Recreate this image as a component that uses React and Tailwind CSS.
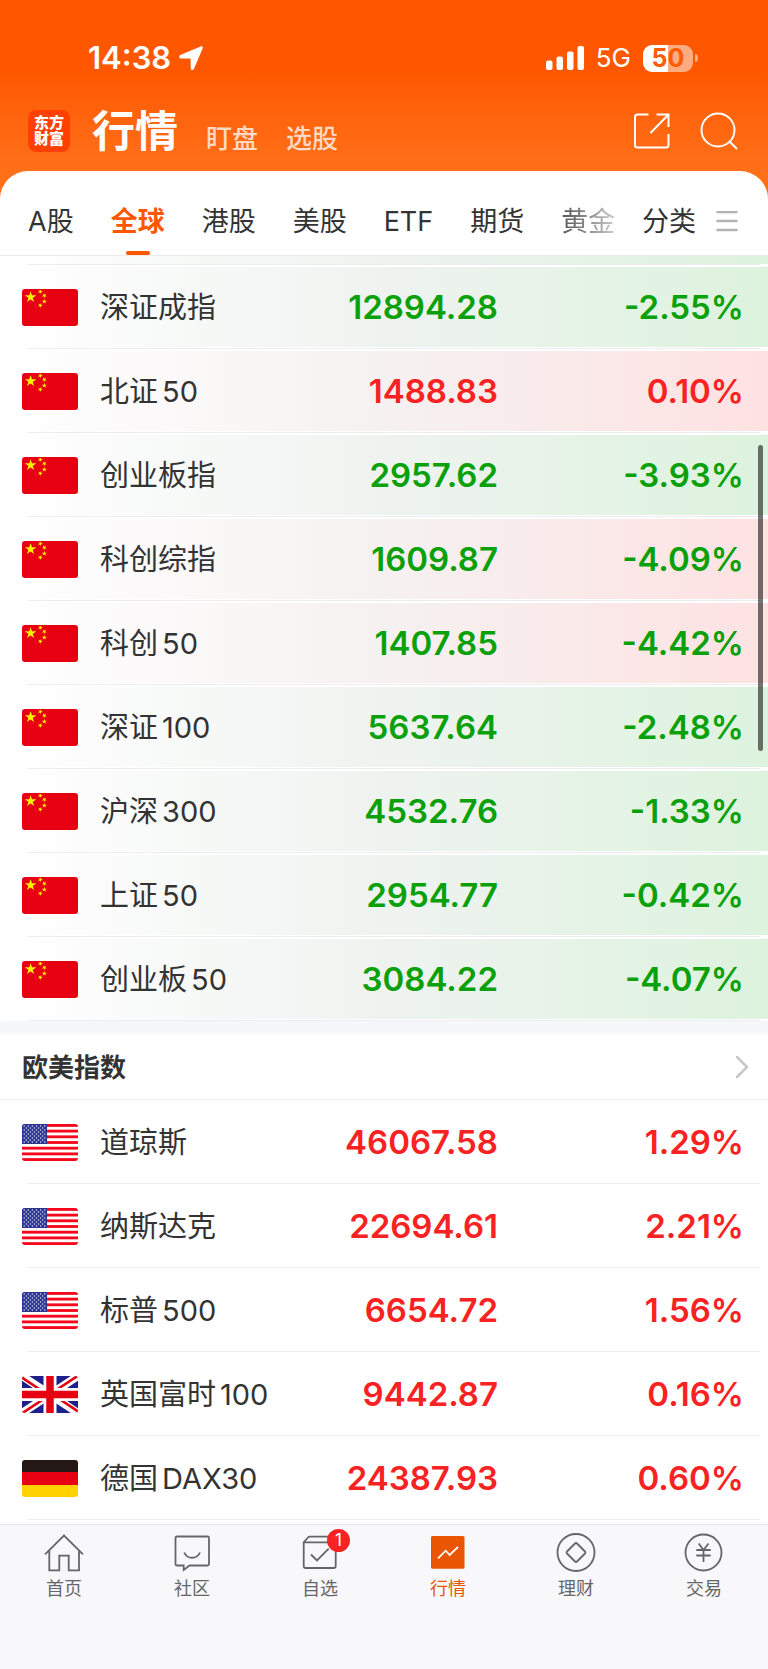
import { ChevronRight } from 'lucide-react';

const cnIndices = [
  { name: '深证成指', price: '12894.28', change: '-2.55%', tint: 'green' },
  { name: '北证50', price: '1488.83', change: '0.10%', tint: 'red' },
  { name: '创业板指', price: '2957.62', change: '-3.93%', tint: 'green' },
  { name: '科创综指', price: '1609.87', change: '-4.09%', tint: 'red' },
  { name: '科创50', price: '1407.85', change: '-4.42%', tint: 'red' },
  { name: '深证100', price: '5637.64', change: '-2.48%', tint: 'green' },
  { name: '沪深300', price: '4532.76', change: '-1.33%', tint: 'green' },
  { name: '上证50', price: '2954.77', change: '-0.42%', tint: 'green' },
  { name: '创业板50', price: '3084.22', change: '-4.07%', tint: 'green' },
];

const westIndices = [
  { name: '道琼斯', price: '46067.58', change: '1.29%', flag: 'us' },
  { name: '纳斯达克', price: '22694.61', change: '2.21%', flag: 'us' },
  { name: '标普500', price: '6654.72', change: '1.56%', flag: 'us' },
  { name: '英国富时100', price: '9442.87', change: '0.16%', flag: 'uk' },
  { name: '德国DAX30', price: '24387.93', change: '0.60%', flag: 'de' },
];

const tints = {
  green: 'bg-linear-to-r from-white via-[#eff3f0] to-[#ddf3de]',
  red: 'bg-linear-to-r from-white via-[#f6f1f1] to-[#fee2e2]',
  none: 'bg-white',
};

const star = '0,-10 2.3,-3.1 9.5,-3.1 3.7,1.2 5.9,8.1 0,3.8 -5.9,8.1 -3.7,1.2 -9.5,-3.1 -2.3,-3.1';

function ChinaFlag() {
  return (
    <g>
      <rect width="56" height="37" fill="#e60012" />
      <g fill="#fff100">
        <polygon points={star} transform="translate(8.6 8.2) scale(0.6)" />
        <polygon points={star} transform="translate(18.3 2.6) rotate(20) scale(0.26)" />
        <polygon points={star} transform="translate(22.3 6.6) rotate(40) scale(0.26)" />
        <polygon points={star} transform="translate(22.3 12.6) scale(0.26)" />
        <polygon points={star} transform="translate(18.3 16.4) rotate(20) scale(0.26)" />
      </g>
    </g>
  );
}

function UsFlag() {
  const stripes = [0, 2, 4, 6, 8, 10, 12];
  const dots = [];
  for (let row = 0; row < 9; row++) {
    for (let col = 0; col < (row % 2 ? 5 : 6); col++) {
      dots.push([2.2 + col * 4.1 + (row % 2 ? 2.05 : 0), 2 + row * 2]);
    }
  }
  return (
    <g>
      <rect width="56" height="37" fill="#fff" />
      {stripes.map((s) => (
        <rect key={s} y={(s * 37) / 13} width="56" height={37 / 13} fill="#f5081c" />
      ))}
      <rect width="25" height="20" fill="#2d3594" />
      {dots.map(([x, y]) => (
        <circle key={`${x}-${y}`} cx={x} cy={y} r="0.75" fill="#dfe1f2" />
      ))}
    </g>
  );
}

function UkFlag() {
  return (
    <g>
      <rect width="56" height="37" fill="#1d2088" />
      <path d="M0 0 56 37M56 0 0 37" stroke="#fff" strokeWidth="8" />
      <path d="M-1 1 27 19.5M29 17.5 57 -1M57 36 29 17.5M27 19.5 -1 38" stroke="#e60012" strokeWidth="2.6" />
      <path d="M28 0V37M0 18.5H56" stroke="#fff" strokeWidth="13" />
      <path d="M28 0V37M0 18.5H56" stroke="#e60012" strokeWidth="7.5" />
    </g>
  );
}

function GermanFlag() {
  return (
    <g>
      <rect width="56" height="13" fill="#231815" />
      <rect y="12" width="56" height="13" fill="#e60012" />
      <rect y="25" width="56" height="12" fill="#ffd100" />
    </g>
  );
}

const flags = { cn: ChinaFlag, us: UsFlag, uk: UkFlag, de: GermanFlag };

function Flag({ code }) {
  const Shape = flags[code];
  return (
    <svg viewBox="0 0 56 37" className="w-14 h-[37px] shrink-0 rounded-[3px]" aria-hidden="true">
      <Shape />
    </svg>
  );
}

// Splits "北证50" so the latin part gets a small gap
function IndexName({ name }) {
  const [, zh, latin] = name.match(/^([^A-Z0-9]+)(.*)$/);
  return (
    <span className="flex items-center gap-1 pt-0.5">
      <span>{zh}</span>
      {latin && <span>{latin}</span>}
    </span>
  );
}

function IndexTable({ label, rows }) {
  return (
    <table className="block" aria-label={label}>
      <tbody className="block">
        {rows.map((row) => {
          const color = row.change.startsWith('-') ? 'text-[#0aa00a]' : 'text-[#f92222]';
          return (
            <tr
              key={row.name}
              className={`relative flex items-center h-[84px] pl-[22px] pr-6 border-y-2 border-white bg-clip-padding after:absolute after:left-7 after:right-2 after:-bottom-0.5 after:h-px after:bg-[#ececee] ${tints[row.tint || 'none']}`}
            >
              <td className="flex flex-1 items-center gap-[22px] text-[29px] leading-10 text-[#333]">
                <Flag code={row.flag || 'cn'} />
                <IndexName name={row.name} />
              </td>
              <td className={`text-right text-[33px] leading-10 font-semibold ${color}`}>{row.price}</td>
              <td className={`w-[246px] text-right text-[33px] leading-10 font-semibold ${color}`}>{row.change}</td>
            </tr>
          );
        })}
      </tbody>
    </table>
  );
}

function StatusBar() {
  return (
    <div className="flex items-center justify-between h-[42px] pl-[88px] pr-[70px]">
      <div className="flex items-center gap-2">
        <span className="text-[31px] leading-10 font-semibold">14:38</span>
        <svg viewBox="0 0 24 24" className="size-6" fill="currentColor" aria-hidden="true">
          <path d="M21.6.4 1.3 9C-.5 9.8 0 12.4 1.9 12.4L10.8 12.5Q11.6 12.5 11.6 13.3L11.7 22.2C11.7 24.3 14.2 24.6 15 22.8L23.7 2.3C24.2.9 23 0 21.6.4Z" />
        </svg>
      </div>
      <div className="flex items-center">
        <svg viewBox="0 0 38 26" className="w-[38px] h-[26px]" fill="currentColor" aria-hidden="true">
          <rect x="0" y="15.5" width="6.5" height="9.5" rx="2" />
          <rect x="10.5" y="11.5" width="6.5" height="13.5" rx="2" />
          <rect x="21" y="6.5" width="6.5" height="18.5" rx="2" />
          <rect x="31.5" y="1" width="6.5" height="24" rx="2" />
        </svg>
        <span className="ml-3 text-[26px] leading-10">5G</span>
        <span className="flex items-center justify-center ml-3 w-[50px] h-[27px] rounded-[9px] bg-linear-to-r from-white from-50% to-[#ffab80] to-50% text-[25px] leading-[27px] font-bold text-[#ff5a05]">
          50
        </span>
        <span className="ml-0.5 w-[3px] h-2 rounded-r-full bg-[#ffab80]" />
      </div>
    </div>
  );
}

function Header() {
  return (
    <header className="pt-[37px] pb-7 bg-linear-to-b from-[#ff5700] from-35% to-[#ff7018] to-85% text-white">
      <StatusBar />
      <div className="flex items-center pt-3 pl-7 pr-[30px] h-[92px]">
        <div className="flex flex-col items-center justify-center size-[42px] rounded-lg bg-[#ff4000] text-[15px] leading-4 font-black">
          <span>东方</span>
          <span>财富</span>
        </div>
        <nav className="flex items-center gap-7 ml-[22px] text-[26px] leading-10 font-medium">
          <h1 className="text-[43px] leading-[60px] font-bold">行情</h1>
          <a href="#watch" className="pt-4 text-white/75">盯盘</a>
          <a href="#pick" className="pt-4 text-white/75">选股</a>
        </nav>
        <div className="flex items-center gap-[30px] ml-auto">
          <button type="button" aria-label="分享">
            <svg viewBox="0 0 36 36" className="size-9" fill="none" stroke="currentColor" strokeWidth="2" aria-hidden="true">
              <path d="M14.5 1.5H3.5Q1 1.5 1 4V32Q1 34.5 3.5 34.5H32Q34.5 34.5 34.5 32V21M22.5 1.5H34.5V14M34.5 1.5 16.5 20" />
            </svg>
          </button>
          <button type="button" aria-label="搜索">
            <svg viewBox="0 0 38 38" className="size-[38px]" fill="none" stroke="currentColor" strokeWidth="2" aria-hidden="true">
              <circle cx="18" cy="18" r="16.5" />
              <path d="M29.5 29.5 37 37" />
            </svg>
          </button>
        </div>
      </div>
    </header>
  );
}

const tabs = ['A股', '全球', '港股', '美股', 'ETF', '期货', '黄金'];

function Tabs() {
  return (
    <nav className="relative flex justify-between h-[85px] -mt-7 pl-7 pr-[30px] rounded-t-[28px] border-b border-[#ebebeb] bg-white text-[27px] leading-10 text-[#333] whitespace-nowrap">
      <div className="flex gap-[37px]">
        {tabs.map((tab) => {
          const active = tab === '全球';
          const faded = tab === '黄金';
          return (
            <button key={tab} type="button" className="flex flex-col items-center justify-between pt-[31px]">
              <span
                className={
                  active
                    ? 'font-bold text-[#ff5600]'
                    : faded
                      ? 'bg-linear-to-r from-[#555] to-[#ccc] bg-clip-text text-transparent'
                      : ''
                }
              >
                {tab}
              </span>
              {active && <span className="w-6 h-1 rounded-full bg-[#ff5600]" />}
            </button>
          );
        })}
      </div>
      <button type="button" className="flex items-center gap-5 pt-[18px]">
        分类
        <svg viewBox="0 0 22 22" className="size-[22px]" stroke="#b3b3b3" strokeWidth="2.5" strokeLinecap="round" aria-hidden="true">
          <path d="M1.5 1H20.5M1.5 10H20.5M1.5 19H20.5" />
        </svg>
      </button>
    </nav>
  );
}

const navItems = [
  {
    label: '首页',
    icon: <path d="M1 21.3 20 2.5 39 21.3M5.3 17.5V37.3H15.3V22.7H24.7V37.3H35V17.5" />,
  },
  {
    label: '社区',
    icon: (
      <path d="M5 3.5H35.5Q37 3.5 37 5V31Q37 32.5 35.5 32.5H17.5L11.7 37V32.5H5Q3.5 32.5 3.5 31V5Q3.5 3.5 5 3.5ZM12.3 19.5C15 26.5 25 26.5 28 19.5" />
    ),
  },
  {
    label: '自选',
    badge: '1',
    icon: (
      <path d="M3.7 9.3H35.7V33Q35.7 35 33.7 35H5.7Q3.7 35 3.7 33V9.3L8 4.5Q8.7 3.7 9.7 3.7H34M11 21.5 17 27.5 28.7 15.7" />
    ),
  },
  {
    label: '行情',
    active: true,
    icon: (
      <>
        <rect x="3" y="3" width="33.5" height="32.8" rx="1.5" fill="#ea5504" stroke="none" />
        <path d="M10 25.3 17.7 17.7 21.7 22 30 14" stroke="#fff" />
      </>
    ),
  },
  {
    label: '理财',
    icon: (
      <>
        <circle cx="20" cy="19.5" r="18.5" />
        <path d="M19 10.5Q20 9.5 21 10.5L29 18.5Q30 19.5 29 20.5L21 28.5Q20 29.5 19 28.5L11 20.5Q10 19.5 11 18.5Z" />
      </>
    ),
  },
  {
    label: '交易',
    icon: (
      <>
        <circle cx="19.5" cy="19.5" r="18" />
        <path d="M14.7 10.5 19.5 17 24.5 10.5M19.5 17V29M12.3 17H26.7M12.3 22.5H26.7" />
      </>
    ),
  },
];

function BottomNav() {
  return (
    <nav className="grid grid-cols-6 items-start grow shrink-0 pt-2 pb-16 border-t border-[#e6e6ea] bg-[#f8f8fb]">
      {navItems.map((item) => (
        <a
          key={item.label}
          href={`#${item.label}`}
          className={`flex flex-col items-center gap-1 text-[18px] leading-6 ${item.active ? 'text-[#ea5504]' : 'text-[#666]'}`}
        >
          <span className="relative">
            <svg viewBox="0 0 40 40" className="size-10" fill="none" stroke="currentColor" strokeWidth="1.8" aria-hidden="true">
              {item.icon}
            </svg>
            {item.badge && (
              <span className="absolute -top-1 -right-2.5 size-[23px] rounded-full bg-[#f92222] text-center text-[17px] leading-[23px] text-white">
                {item.badge}
              </span>
            )}
          </span>
          {item.label}
        </a>
      ))}
    </nav>
  );
}

export default function App() {
  return (
    <div className="flex flex-col min-h-screen bg-white font-[Inter,'Noto_Sans_CJK_SC',sans-serif]">
      <Header />
      <Tabs />

      <main className="relative pb-1">
        {/* Tail of the row scrolled under the tabs */}
        <div className={`h-2 ${tints.green}`} />
        <div className="h-px ml-7 mr-2 bg-[#ececee]" />
        <IndexTable label="中国指数" rows={cnIndices} />

        <section className="border-t-[13px] border-[#f5f7fa]">
          <a href="#west" className="flex items-center justify-between h-[66px] pl-[22px] pr-1.5 border-b border-[#ebebeb] text-[#333]">
            <h2 className="pt-0.5 text-[26px] leading-10 font-bold">欧美指数</h2>
            <ChevronRight className="size-10 text-[#c8c8c8]" strokeWidth={1.5} />
          </a>
          <IndexTable label="欧美指数" rows={westIndices} />
        </section>

        {/* Scroll indicator */}
        <div className="absolute top-[189px] right-[5px] w-[5px] h-[306px] rounded-full bg-black/55" />
      </main>

      <BottomNav />
    </div>
  );
}
